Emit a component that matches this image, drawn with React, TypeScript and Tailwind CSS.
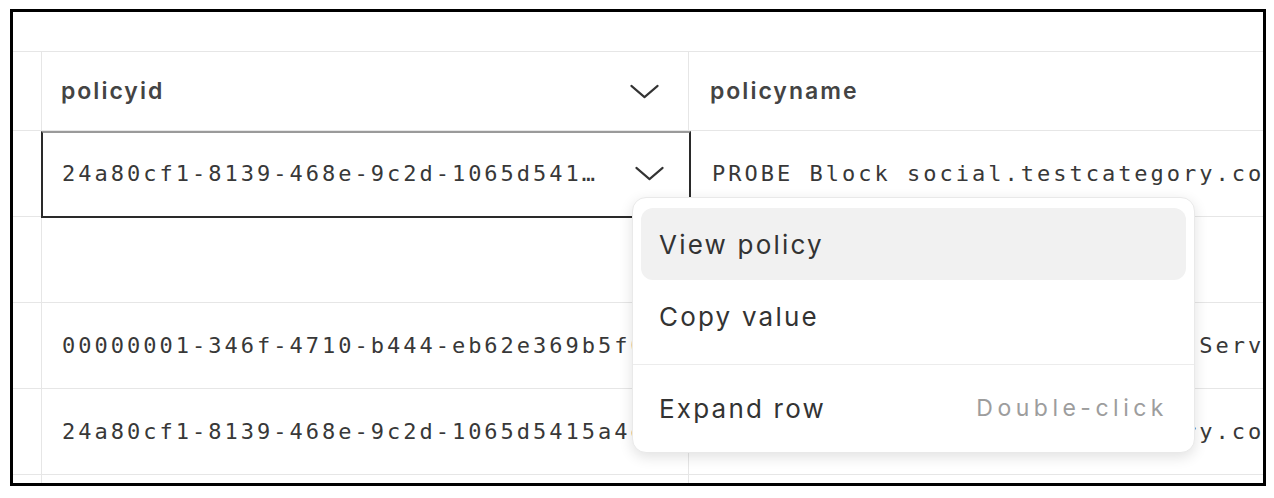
import React from 'react';

const mono = "font-['DejaVu_Sans_Mono',monospace] text-[22px] tracking-[3px] text-[#383838]";
const sans = "font-['Inter',sans-serif]";

const Chevron: React.FC<{ className?: string }> = ({ className }) => (
  <svg viewBox="0 0 32 16" width="31" height="15" className={className} fill="none">
    <polyline points="2,2 16,14 30,2" stroke="#333" strokeWidth="2.2" strokeLinecap="round" strokeLinejoin="round" />
  </svg>
);

const rows = [
  { id: '', name: '' },
  { id: '00000001-346f-4710-b444-eb62e369b5f0', name: 'Allow Microsoft 365 Essential Services' },
  { id: '24a80cf1-8139-468e-9c2d-1065d5415a4e', name: 'PROBE Block social.testcategory.com' },
];

const App: React.FC = () => {
  return (
    <div className="w-[1274px] h-[498px] bg-white pl-[10px] pt-[9px]">
      <div className="relative w-[1256px] h-[477px] border-[3px] border-black bg-white overflow-hidden">
        {/* toolbar strip */}
        <div className="h-[40px] border-b border-[#e6e6e6]" />

        {/* header row */}
        <div className="flex h-[79px] border-b border-[#e6e6e6]">
          <div className="w-[29px] shrink-0 border-r border-[#e6e6e6]" />
          <div className="w-[647px] shrink-0 border-r border-[#e6e6e6] flex items-center justify-between pl-[19px] pr-[28px]">
            <span className={`${sans} text-[23px] font-semibold tracking-[2px] text-[#444]`}>policyid</span>
            <Chevron />
          </div>
          <div className="flex-1 flex items-center pl-[21px]">
            <span className={`${sans} text-[23px] font-semibold tracking-[2px] text-[#444]`}>policyname</span>
          </div>
        </div>

        {/* selected row */}
        <div className="flex h-[86px] border-b border-[#e6e6e6]">
          <div className="w-[29px] shrink-0 border-r border-[#e6e6e6]" />
          <div className="relative w-[647px] shrink-0 flex items-center justify-between pl-[20px] pr-[24px]">
            <span className={`${mono} whitespace-nowrap`}>24a80cf1-8139-468e-9c2d-1065d541…</span>
            <Chevron />
            <div className="absolute top-0 -left-px -right-[2px] -bottom-[2px] border-2 border-[#2a2a2a] border-t-[#9a9a9a] z-10 pointer-events-none" />
          </div>
          <div className="flex-1 flex items-center pl-[23px] overflow-hidden">
            <span className={`${mono} whitespace-nowrap`}>PROBE Block social.testcategory.com</span>
          </div>
        </div>

        {rows.map((row, i) => (
          <div key={i} className="flex h-[86px] border-b border-[#e6e6e6]">
            <div className="w-[29px] shrink-0 border-r border-[#e6e6e6]" />
            <div className="w-[647px] shrink-0 border-r border-[#e6e6e6] flex items-center pl-[20px] overflow-hidden">
              <span className={`${mono} whitespace-nowrap`}>{row.id}</span>
            </div>
            <div className="flex-1 flex items-center pl-[23px] overflow-hidden">
              <span className={`${mono} whitespace-nowrap`}>{row.name}</span>
            </div>
          </div>
        ))}

        <div className="flex h-[40px]">
          <div className="w-[29px] shrink-0 border-r border-[#e6e6e6]" />
          <div className="w-[647px] shrink-0 border-r border-[#e6e6e6]" />
        </div>

        {/* context menu */}
        <div className="absolute left-[619px] top-[185px] w-[563px] z-20 rounded-[14px] border border-[#e9e9e9] bg-white shadow-[0_4px_14px_rgba(0,0,0,0.12)] px-2 pt-[10px] pb-[8px]">
          <div className={`${sans} h-[72px] rounded-[12px] bg-[#f1f1f1] flex items-center px-[18px] text-[26px] tracking-[2.2px] text-[#333]`}>
            View policy
          </div>
          <div className={`${sans} h-[72px] flex items-center px-[18px] text-[26px] tracking-[2.2px] text-[#333]`}>
            Copy value
          </div>
          <div className="-mx-2 mt-[12px] mb-[7px] h-px bg-[#ececec]" />
          <div className={`${sans} h-[72px] flex items-center justify-between pl-[18px] pr-[18px] text-[26px] tracking-[2.2px] text-[#333]`}>
            <span>Expand row</span>
            <span className="text-[23px] tracking-[4.5px] text-[#9d9d9d]">Double-click</span>
          </div>
        </div>
      </div>
    </div>
  );
};

export default App;
